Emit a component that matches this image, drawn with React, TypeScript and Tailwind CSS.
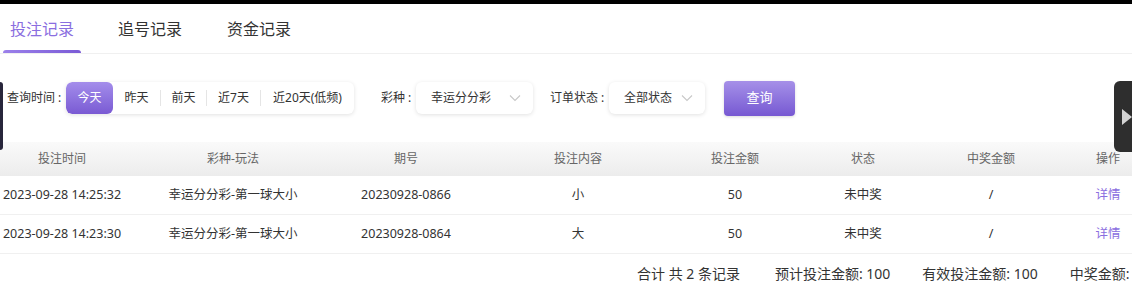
import React from "react";

const font = { fontFamily: '"Noto Sans", "Noto Sans CJK SC", sans-serif' };

const cols = "grid-cols-[124px_218px_128px_216px_98px_158px_98px_136px]";

function Chevron() {
  return (
    <svg width="12" height="8" viewBox="0 0 12 8" className="text-[#c8c8c8]">
      <path d="M1 1.5 L6 6.5 L11 1.5" fill="none" stroke="currentColor" strokeWidth="1.1" />
    </svg>
  );
}

export default function App() {
  const rows = [
    ["2023-09-28 14:25:32", "幸运分分彩-第一球大小", "20230928-0866", "小", "50", "未中奖", "/"],
    ["2023-09-28 14:23:30", "幸运分分彩-第一球大小", "20230928-0864", "大", "50", "未中奖", "/"],
  ];
  return (
    <div className="w-[1132px] h-[290px] overflow-hidden bg-white text-[#333] relative" style={font}>
      <div className="h-[4px] bg-black" />
      {/* tabs */}
      <div className="flex h-[50px] border-b border-[#f0f0f0] text-[16px]">
        <div className="relative w-[84px] flex items-center pl-[10px] text-[#8a6ee0]">
          投注记录
          <div className="absolute left-[3px] right-[3px] bottom-[0px] h-[3px] rounded-t-full bg-gradient-to-r from-[#9b80ea] to-[#7b5bd6]" />
        </div>
        <div className="flex items-center ml-[34px]">追号记录</div>
        <div className="flex items-center ml-[45px]">资金记录</div>
      </div>
      {/* left & right dark edges */}
      <div className="absolute left-0 top-[82px] w-[3px] h-[68px] bg-[#28263b] rounded-r-[3px]" />
      <div className="absolute right-0 top-[81px] w-[18px] h-[71px] bg-[#2e2e2e] rounded-l-[6px] flex items-center justify-end">
        <div className="w-0 h-0 border-t-[8px] border-b-[8px] border-l-[10px] border-t-transparent border-b-transparent border-l-[#d4d4d4]" />
      </div>
      {/* filter row */}
      <div className="flex items-center h-[36px] mt-[26px] text-[12px] pl-[7px]">
        <span className="w-[59px]">查询时间 :</span>
        <div className="flex items-center h-[32px] rounded-[6px] bg-white shadow-[0_1px_4px_rgba(0,0,0,0.12)] overflow-hidden">
          <div className="h-full w-[47px] flex items-center justify-center text-white bg-gradient-to-b from-[#a48deb] to-[#7a5ad3] rounded-[6px]">今天</div>
          <div className="h-full w-[47px] flex items-center justify-center">昨天</div>
          <div className="w-px h-[16px] bg-[#e5e5e5]" />
          <div className="h-full w-[45px] flex items-center justify-center">前天</div>
          <div className="w-px h-[16px] bg-[#e5e5e5]" />
          <div className="h-full w-[53px] flex items-center justify-center">近7天</div>
          <div className="w-px h-[16px] bg-[#e5e5e5]" />
          <div className="h-full w-[93px] flex items-center justify-center">近20天(低频)</div>
        </div>
        <span className="ml-[27px] w-[35px]">彩种 :</span>
        <div className="h-[32px] w-[117px] rounded-[6px] shadow-[0_1px_4px_rgba(0,0,0,0.12)] flex items-center pl-[15px] pr-[12px] justify-between">
          <span>幸运分分彩</span>
          <Chevron />
        </div>
        <span className="ml-[17px] w-[59px]">订单状态 :</span>
        <div className="h-[32px] w-[96px] rounded-[6px] shadow-[0_1px_4px_rgba(0,0,0,0.12)] flex items-center pl-[15px] pr-[12px] justify-between">
          <span>全部状态</span>
          <Chevron />
        </div>
        <div className="ml-[19px] h-[35px] w-[71px] rounded-[4px] bg-gradient-to-b from-[#a690e8] to-[#7758d2] text-white text-[13px] flex items-center justify-center shadow-[0_1px_3px_rgba(0,0,0,0.15)]">查询</div>
      </div>
      {/* table */}
      <div className="mt-[26px] w-[1176px]">
        <div className={`grid ${cols} h-[34px] items-center text-[12px] text-[#666] bg-gradient-to-b from-[#fafafa] to-[#ececec]`}>
          {["投注时间", "彩种-玩法", "期号", "投注内容", "投注金额", "状态", "中奖金额", "操作"].map((h) => (
            <div key={h} className="text-center">{h}</div>
          ))}
        </div>
        {rows.map((r, i) => (
          <div key={i} className={`grid ${cols} h-[39px] items-center text-[12.5px] border-b border-[#f0f0f0]`}>
            {r.map((c, j) => (
              <div key={j} className="text-center whitespace-nowrap">{c}</div>
            ))}
            <div className="text-center text-[#8a6ee0]">详情</div>
          </div>
        ))}
      </div>
      {/* footer */}
      <div className="flex items-center h-[38px] text-[14px] pl-[637px] whitespace-nowrap">
        <span>合计 共 2 条记录</span>
        <span className="ml-[35px]">预计投注金额: 100</span>
        <span className="ml-[32px]">有效投注金额: 100</span>
        <span className="ml-[32px]">中奖金额: 0</span>
      </div>
    </div>
  );
}
